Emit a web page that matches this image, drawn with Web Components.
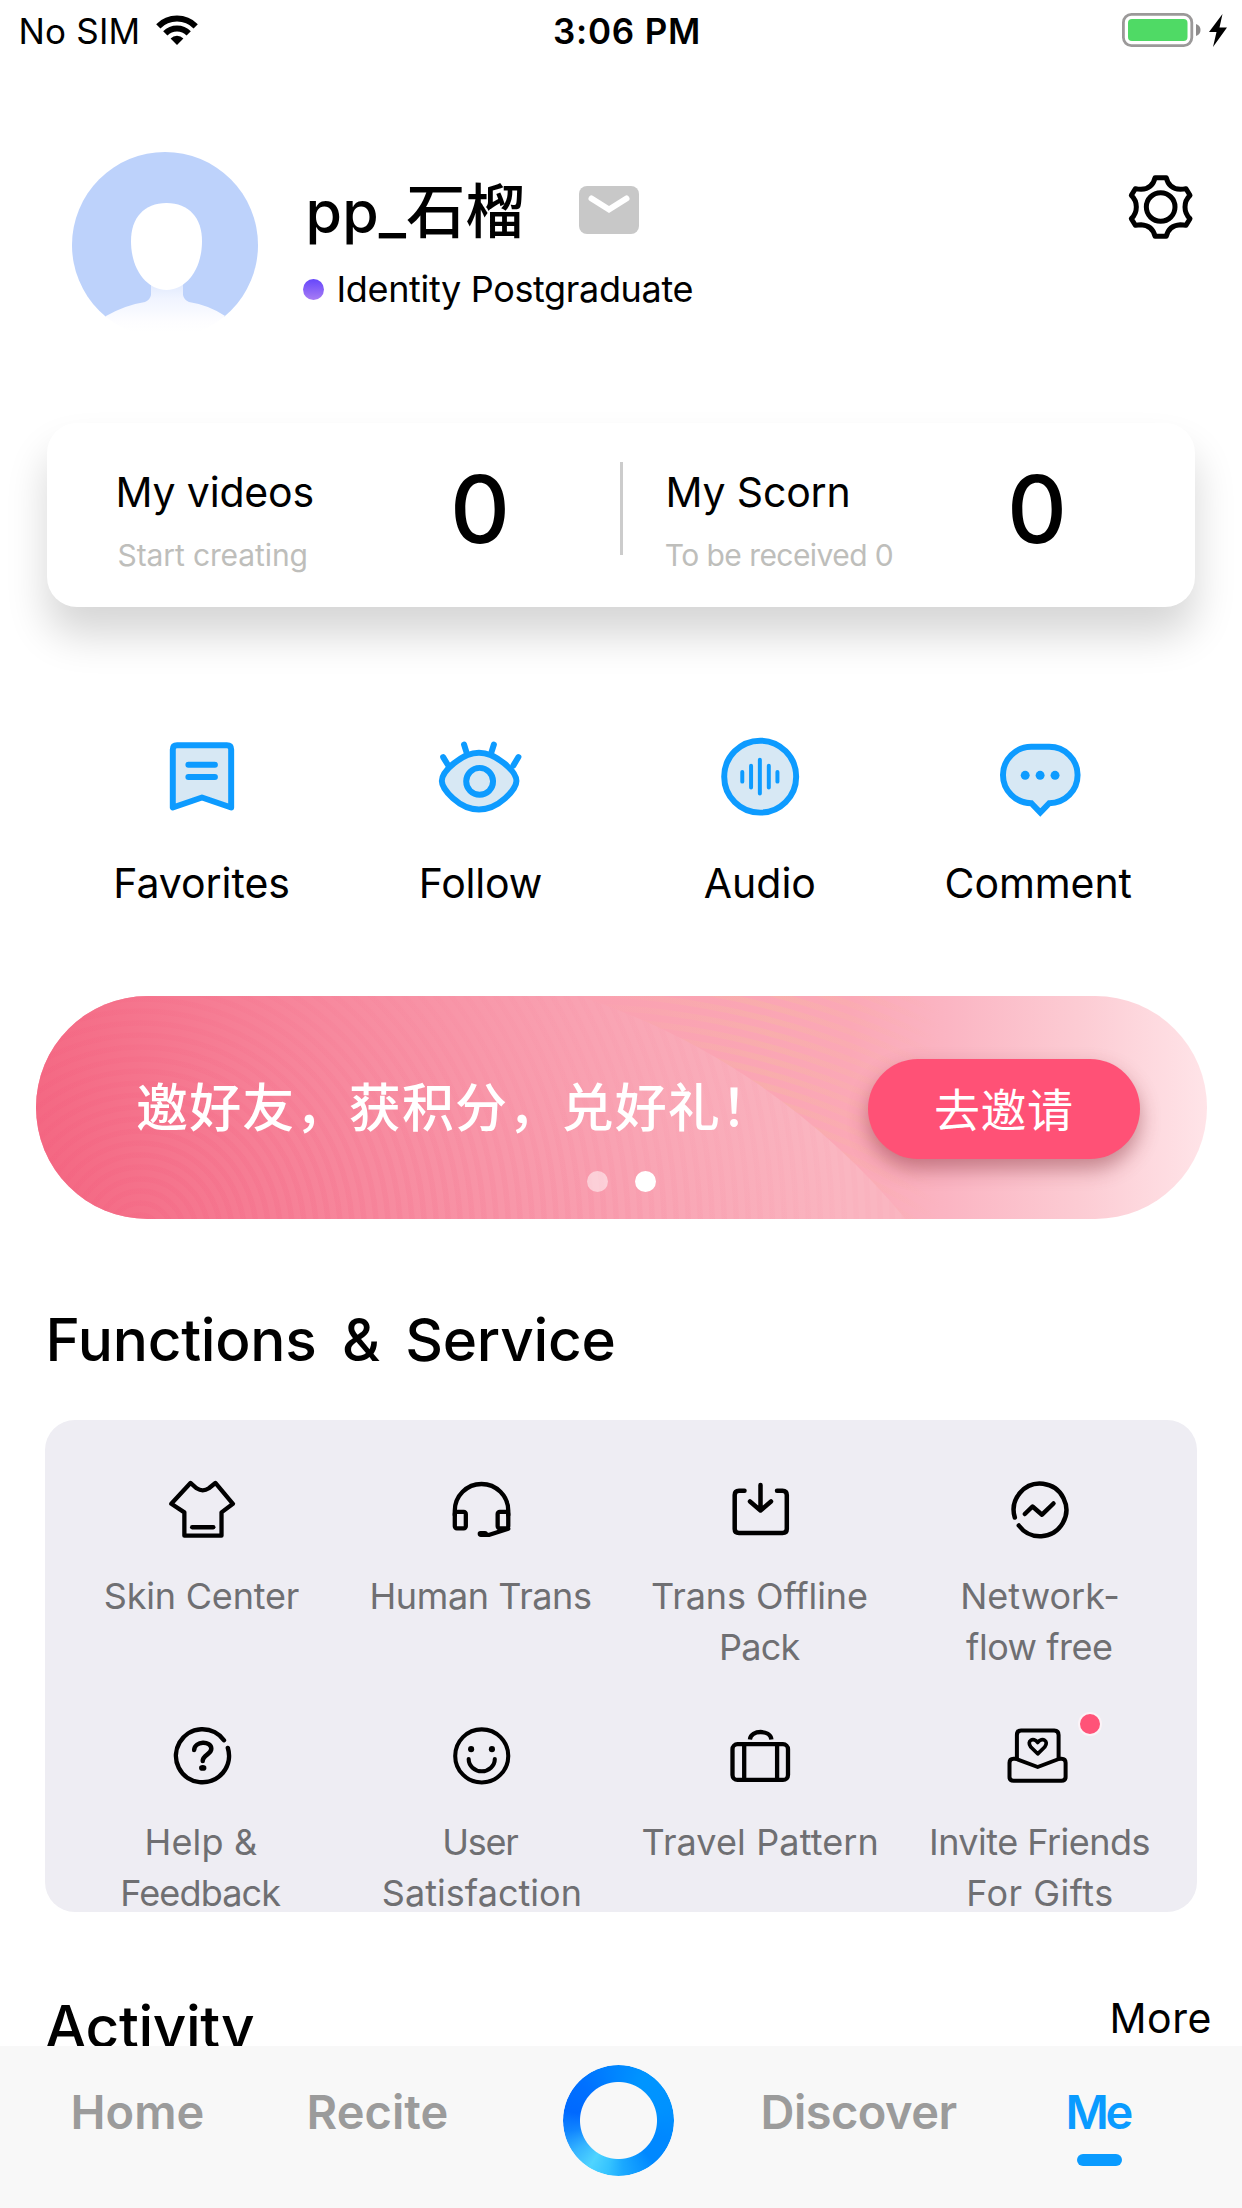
<!DOCTYPE html>
<html lang="en">
<head>
<meta charset="utf-8">
<title>Me</title>
<style>
html,body{margin:0;padding:0}
body{width:1242px;height:2208px;overflow:hidden;background:#fff;color:#000;font-family:Inter,"Noto Sans CJK SC",sans-serif;font-optical-sizing:none}
</style>
</head>
<body>
<profile-app></profile-app>
<script>
const base = '*{box-sizing:border-box}svg{display:block;overflow:visible}';
function define(name, css, html, after) {
  customElements.define(name, class extends HTMLElement {
    connectedCallback() {
      if (this.shadowRoot) return;
      const root = this.attachShadow({ mode: 'open' });
      const body = typeof html === 'function' ? html(this) : html;
      root.innerHTML = '<style>' + base + css + '</style>' + body;
      if (after) after(this, root);
    }
  });
}

/* One line of text whose letters are tracked so that its ink fills the given width. */
const pen = document.createElement('canvas').getContext('2d');
customElements.define('fit-text', class extends HTMLElement {
  connectedCallback() {
    if (this.shadowRoot) return;
    const a = n => this.getAttribute(n);
    const width = +a('w'), size = +a('size'), weight = a('weight') || 400, text = this.textContent;
    const space = +(a('space') || 0);
    const root = this.attachShadow({ mode: 'open' });
    pen.font = `${weight} ${size}px Inter, "Noto Sans CJK SC", sans-serif`;
    const m = pen.measureText(text);
    const ink = m.actualBoundingBoxLeft + m.actualBoundingBoxRight + space * (text.split(' ').length - 1);
    const count = [...text].length;
    /* optical correction for stems and for open or slanted first letters */
    const nudge = /^[BDFHIMNPRSUp]/.test(text) ? 1.5 : /^[ACTf]/.test(text) && size < 50 ? -1.2 : 0;
    const track = count > 1 ? (width - (nudge > 0 ? 2 : 0) - ink) / (count - 1) : 0;
    root.innerHTML = `<style>:host{display:block;flex:none;width:${width}px;height:${a('lh')}px;line-height:${a('lh')}px;font-size:${size}px;font-weight:${weight};white-space:pre}
      span{display:block;width:max-content;margin-left:${m.actualBoundingBoxLeft + nudge}px;letter-spacing:${track}px;word-spacing:${space}px}</style><span><slot></slot></span>`;
  }
});

define('status-bar', `
  :host{display:flex;align-items:center;height:62px;margin-bottom:1px;padding:0 15px 0 20px}
  .wifi{margin:-2px 356px 0 18px}
  .power{display:flex;align-items:center;gap:8px;margin:-2px 0 0 auto}
`, `
  <fit-text w="118" size="35" lh="40">No SIM</fit-text>
  <svg class="wifi" width="42" height="30" viewBox="0 0 42 30">
    <g fill="none" stroke="#000" stroke-width="6"><path d="M2.3 11.3A26.5 26.5 0 0 1 39.7 11.3"/><path d="M9.3 18.3A16.5 16.5 0 0 1 32.7 18.3"/></g>
    <path d="M14.6 23.5A9 9 0 0 1 27.4 23.5L21 30Z"/>
  </svg>
  <fit-text w="144" size="35" lh="40" weight="600">3:06 PM</fit-text>
  <div class="power">
    <svg width="79" height="34" viewBox="0 0 79 34">
      <rect x="1.4" y="1.4" width="68.4" height="31.2" rx="8" fill="none" stroke="#9b9999" stroke-width="2.8"/>
      <rect x="6" y="6" width="59.500" height="22" rx="4" fill="#4fda65"/>
      <path d="M74 11q4.500 1.500 4.500 6t-4.500 6z" fill="#8e8c8c"/>
    </svg>
    <svg width="18" height="33" viewBox="0 0 18 33"><path d="M13.500 0L0 18H7.500L4 33L18 13.500H10.500Z"/></svg>
  </div>
`);

define('profile-header', `
  :host{display:flex;align-items:flex-start;height:360px;padding:89px 49px 0 72px}
  .info{margin:28px auto 0 45px}
  .row{display:flex;align-items:center}
  .name{padding-left:5px;gap:56px}
  .name fit-text{margin:2px 0 -2px}
  .role{gap:14px;margin-top:29px}
  .dot{width:21px;height:21px;border-radius:50%;background:linear-gradient(#6647fb,#a87cf4)}
  .gear{margin-top:23px}
`, `
  <svg width="186" height="186" viewBox="0 0 186 186">
    <defs>
      <clipPath id="disc"><circle cx="93" cy="93" r="93"/></clipPath>
      <linearGradient id="chest" gradientUnits="userSpaceOnUse" x1="0" y1="128" x2="0" y2="180"><stop offset="0" stop-color="#dde7fd"/><stop offset=".35" stop-color="#f0f4ff"/><stop offset=".8" stop-color="#fdfdff"/><stop offset="1" stop-color="#fff"/></linearGradient>
    </defs>
    <g clip-path="url(#disc)">
      <rect width="186" height="165" fill="#bdd2fb"/>
      <path d="M79 128h32v15q1 5 6 7q20 3 37 14.500v2v15H33v-17q20-11.500 40-14.500q5-2 6-7z" fill="url(#chest)"/>
      <path d="M94.500 51C117 51 130 66 130 89C130 119 113 138 94.500 138C76 138 59 119 59 89C59 66 72 51 94.500 51Z" fill="#fff"/>
    </g>
  </svg>
  <div class="info">
    <div class="row name">
      <fit-text w="215" size="59" lh="60" weight="500">pp_石榴</fit-text>
      <svg width="60" height="48" viewBox="0 0 60 48"><rect width="60" height="48" rx="8" fill="#c8c8c8"/><path d="M12.500 12.500L30 23.500L47.500 12.500" fill="none" stroke="#fff" stroke-width="6" stroke-linecap="round"/></svg>
    </div>
    <div class="row role"><span class="dot"></span><fit-text w="355" size="36" lh="40">Identity Postgraduate</fit-text></div>
  </div>
  <svg class="gear" width="64" height="64" viewBox="148 525 192 192" fill="none" stroke="#000" stroke-width="15" stroke-linejoin="round">
    <path d="M226 533H260Q267 566 302 568Q311 568 319 566L331 586Q316 600 316 621Q316 642 331 656L319 676Q311 674 302 674Q267 676 260 709H226Q219 676 184 674Q175 674 167 676L155 656Q170 642 170 621Q170 600 155 586L167 566Q175 568 184 568Q219 566 226 533Z"/>
    <circle cx="243" cy="621" r="43"/>
  </svg>
`);

define('stat-card', `
  :host{display:flex;align-items:flex-start;height:184px;margin:0 47px;border-radius:30px;background:#fff;box-shadow:0 28px 42px rgba(0,0,0,.165)}
  .divider{width:3px;height:93px;margin-top:39px;background:#ccc}
`, `
  <stat-item style="--w:573px;--pad:70px;--num:408px"><fit-text slot="title" w="196" size="41" lh="40">My videos</fit-text><fit-text slot="note" w="190" size="30" lh="30">Start creating</fit-text><fit-text slot="value" w="50" size="93" lh="100" weight="500">0</fit-text></stat-item>
  <span class="divider"></span>
  <stat-item style="--w:572px;--pad:44px;--num:389px"><fit-text slot="title" w="182" size="41" lh="40">My Scorn</fit-text><fit-text slot="note" w="227" size="30" lh="30">To be received 0</fit-text><fit-text slot="value" w="50" size="93" lh="100" weight="500">0</fit-text></stat-item>
`);
define('stat-item', `
  :host{display:grid;grid-template-columns:calc(var(--num) - var(--pad)) 1fr;width:var(--w);padding-left:var(--pad)}
  .words{padding-top:49px}
  .note{margin-top:28px;color:#bebebb}
  .value{padding-top:36px}
`, `<div class="words"><slot name="title"></slot><div class="note"><slot name="note"></slot></div></div><div class="value"><slot name="value"></slot></div>`);

const quick = {
  favorites: ['210.4 75.4 253.3 253.3', '<path d="M249 294V119Q249 106 262 106H412Q425 106 425 119V294L337 264Z" fill="#d7e8f4" stroke-linejoin="round"/><path d="M296 165H376M296 202H376"/>'],
  follow: ['1047.5 75.4 253.3 253.3', '<path d="M1056 214C1056 184 1118 129 1168 129C1218 129 1281 184 1281 214C1281 238 1228 300 1168 300C1108 300 1056 238 1056 214Z" fill="#d7e8f4"/><circle cx="1170" cy="215" r="40.500"/><path d="M1060 142L1074 165M1123 104L1130 126M1213 104L1206 126M1287 142L1272 167"/>'],
  audio: ['205.8 75.4 253.3 253.3', '<circle cx="330" cy="201" r="108.500" fill="#d7e8f4"/><path stroke-width="12" d="M276 187V216M302.500 168V234M329 150V252M356 168V234M382 187V216"/>'],
  comment: ['1044.500 75.4 253.3 253.3', '<path d="M1145 111H1199A85.500 85 0 0 1 1199 281L1172 309L1145 281A85.500 85 0 0 1 1145 111Z" fill="#d7e8f4"/><g fill="#0d9bff" stroke="none"><circle cx="1126.500" cy="197" r="13.500"/><circle cx="1171.500" cy="197" r="13.500"/><circle cx="1216.500" cy="197" r="13.500"/></g>']
};
define('quick-item', `
  :host{display:flex;flex-direction:column;align-items:center;gap:44px}
  svg{fill:none;stroke:#0d9bff;stroke-width:18;stroke-linecap:round}
`, el => `<svg width="84" height="84" viewBox="${quick[el.getAttribute('icon')][0]}">${quick[el.getAttribute('icon')][1]}</svg><slot></slot>`);
define('quick-actions', `:host{display:grid;grid-template-columns:repeat(4,1fr);height:295px;padding:128px 62px 0}`, `
  <quick-item icon="favorites"><fit-text w="174" size="41" lh="40">Favorites</fit-text></quick-item>
  <quick-item icon="follow"><fit-text w="122" size="41" lh="40">Follow</fit-text></quick-item>
  <quick-item icon="audio"><fit-text w="109.500" size="41" lh="40">Audio</fit-text></quick-item>
  <quick-item icon="comment"><fit-text w="185" size="41" lh="40">Comment</fit-text></quick-item>
`);

/* Invitation banner: the artwork lies under the row of copy and button. */
const rings = (cx, cy, from, to, step) => {
  let out = '';
  for (let r = from; r < to; r += step) out += `<circle cx="${cx}" cy="${cy}" r="${r}"/>`;
  return out;
};
define('invite-banner', `
  :host{display:grid;height:223px;margin:94px 35.500px 0;border-radius:112px;overflow:hidden}
  .art,.copy{grid-area:1/1}
  .copy{display:flex;flex-direction:column;z-index:1}
  .line{display:flex;align-items:flex-start;padding:63px 0 0 101.500px}
  .line>fit-text{margin-top:19px;color:#fff}
  .go{margin-left:130px;width:272px;height:100px;border-radius:50px;background:#ff5176;color:#fff;display:grid;place-items:center;box-shadow:0 10px 20px rgba(120,30,40,.42)}
  .go fit-text{margin-top:1px}
  .pages{display:flex;gap:27px;padding:12px 0 0 551.500px}
  .pages i{width:21px;height:21px;border-radius:50%;background:rgba(255,255,255,.5)}
  .pages i:last-child{background:#fff}
`, `
  <svg class="art" width="1171" height="223" viewBox="35.500 996 1171 223">
    <defs>
      <linearGradient id="back" gradientUnits="userSpaceOnUse" x1="560" y1="0" x2="1206" y2="0"><stop offset="0" stop-color="#faa0b0"/><stop offset=".45" stop-color="#fba8b6"/><stop offset=".6" stop-color="#fbb5c3"/><stop offset=".8" stop-color="#fccbd3"/><stop offset="1" stop-color="#ffe4e8"/></linearGradient>
      <linearGradient id="front" gradientUnits="userSpaceOnUse" x1="50" y1="1170" x2="800" y2="1000"><stop offset="0" stop-color="#f46883"/><stop offset=".4" stop-color="#f7899e"/><stop offset=".72" stop-color="#f9a2b2"/><stop offset="1" stop-color="#fab6c1"/></linearGradient>
      <linearGradient id="bands" gradientUnits="userSpaceOnUse" x1="600" y1="0" x2="940" y2="0"><stop offset="0" stop-color="#f6b5a4" stop-opacity=".05"/><stop offset=".5" stop-color="#f6b5a4" stop-opacity=".5"/><stop offset="1" stop-color="#f9b5a4" stop-opacity="0"/></linearGradient>
      <linearGradient id="ripple" gradientUnits="userSpaceOnUse" x1="420" y1="996" x2="300" y2="1219"><stop offset="0" stop-color="#f2577a" stop-opacity=".03"/><stop offset="1" stop-color="#f2577a" stop-opacity=".13"/></linearGradient>
      <clipPath id="hill"><path d="M35 996H579A710 710 0 0 1 905 1219H35Z"/></clipPath>
    </defs>
    <rect x="35" y="996" width="1172" height="223" fill="url(#back)"/>
    <g fill="none" stroke="url(#bands)" stroke-width="6">${rings(560, 1815, 640, 900, 13)}</g>
    <g clip-path="url(#hill)">
      <rect x="35" y="996" width="1172" height="223" fill="url(#front)"/>
      <g fill="none" stroke="url(#ripple)" stroke-width="5.500">${rings(140, 1235, 20, 790, 12)}</g>
    </g>
  </svg>
  <div class="copy">
    <div class="line"><fit-text w="601" size="52" lh="62" weight="500">邀好友，获积分，兑好礼！</fit-text><div class="go"><fit-text w="136" size="46" lh="60">去邀请</fit-text></div></div>
    <div class="pages"><i></i><i></i></div>
  </div>
`);

const services = {
  skin: ['406 451 176.4 176.4', 10.500, '<path d="M466 473L481 486Q496 496 511 486L527 473L570 524L542 545V602H451V545L419 524Z"/><path d="M470 581.500H522"/>'],
  headset: ['1090 451 176.4 176.4', 10.500, '<path d="M1114 552V541A65.500 65.500 0 0 1 1245 541V552"/><rect x="1114" y="544" width="27" height="40" rx="5"/><rect x="1219" y="544" width="26" height="40" rx="5"/><path d="M1245 585L1199 600H1178"/><path d="M1177 597.500H1188" stroke-width="14"/>'],
  offline: ['0.500 0 72 72', 4.500, '<path d="M20 16.700H14.500Q10.200 16.700 10.200 21V55Q10.200 59 14.500 59H58Q62.300 59 62.300 55V21Q62.300 16.700 58 16.700H52.500"/><path d="M36 11V36M25.500 27.500L36 36.500L46.500 27.500"/>'],
  network: ['0 0 72 72', 4.500, '<path d="M10.800 43.500A26.300 26.300 0 1 1 14.800 51.500"/><path d="M20.800 40L28.500 32.500L38 40.700L49.500 29.500"/>'],
  help: ['406 1053.5 176.4 176.4', 11, '<path d="M557.500 1122A65 65 0 1 1 548 1103"/><path d="M475 1127C476 1104 517 1104 517 1124C517 1138 496 1139 496 1154"/><ellipse cx="496" cy="1171" rx="9" ry="7" fill="#000" stroke="none"/>'],
  smile: ['1090 1053.5 176.4 176.4', 10, '<circle cx="1180" cy="1141.500" r="65"/><path d="M1148 1149A32 30 0 0 0 1212 1149"/><g fill="#000" stroke="none"><circle cx="1154" cy="1125" r="7.500"/><circle cx="1205" cy="1125" r="7.500"/></g>'],
  travel: ['0.500 0 72 72', 4.300, '<rect x="8" y="24.200" width="55.500" height="35.700" rx="5"/><path d="M19.700 24.500V59.500M52.600 24.500V59.500" stroke-linecap="butt"/><path d="M25.400 19.500C26.500 9.500 45.800 9.500 46.900 19.500" stroke-linecap="butt"/>'],
  invite: ['0 0 72 72', 4, '<path d="M12.900 38V15Q12.900 10.500 17 10.500H50.300Q54.600 10.500 54.600 15V38"/><path d="M12.700 38.700H9.500Q5.500 38.700 5.500 42.700V57Q5.500 60.800 9.500 60.800H57.500Q61.600 60.800 61.600 57V42.700Q61.600 38.700 57.500 38.700H54.600"/><path d="M12.500 39L33.700 47L54.800 39"/><path d="M33.700 33.800L26.800 27C22 21 29.500 16.500 33.700 22.500C38 16.500 45.500 21 40.700 27Z" stroke-width="3.700"/>']
};
define('service-item', `
  :host{position:relative;display:flex;flex-direction:column;align-items:center;height:246px;color:#6f6f72}
  svg{margin-bottom:25px;fill:none;stroke:#000;stroke-linecap:round;stroke-linejoin:round}
  .badge{position:absolute;left:177px;top:-8px;width:24px;height:24px;border-radius:50%;background:#ff5378;border:2.500px solid #fbf3f7}
`, el => {
  const [box, stroke, shape] = services[el.getAttribute('icon')];
  return `<svg width="72" height="72" viewBox="${box}" stroke-width="${stroke}">${shape}</svg><slot></slot>${el.hasAttribute('badge') ? '<i class="badge"></i>' : ''}`;
});
const label = (t, w) => `<fit-text w="${w}" size="36" lh="51">${t}</fit-text>`;
define('service-grid', `
  :host{display:grid;grid-template-columns:repeat(4,279.500px);height:492px;margin:50px 45px 0;padding:54px 17px 0;border-radius:30px;background:#eeedf3}
`, `
  <service-item icon="skin">${label('Skin Center', 195)}</service-item>
  <service-item icon="headset">${label('Human Trans', 220.500)}</service-item>
  <service-item icon="offline">${label('Trans Offline', 215)}${label('Pack', 80.500)}</service-item>
  <service-item icon="network">${label('Network-', 157)}${label('flow free', 146)}</service-item>
  <service-item icon="help">${label('Help &amp;', 111.500)}${label('Feedback', 160)}</service-item>
  <service-item icon="smile">${label('User', 75)}${label('Satisfaction', 198)}</service-item>
  <service-item icon="travel">${label('Travel Pattern', 234)}</service-item>
  <service-item icon="invite" badge>${label('Invite Friends', 219.500)}${label('For Gifts', 145)}</service-item>
`);

define('section-title', `:host{display:flex;justify-content:space-between;align-items:flex-start}`, `<slot></slot>`);

define('tab-bar', `
  :host{display:flex;align-items:flex-start;height:162px;padding-left:72px;background:#f8f8f8;color:#9b9b9b}
  .tab{margin-top:41px}
  .me{display:flex;flex-direction:column;align-items:center;gap:17px;color:#0a9bff}
  .me i{width:45px;height:12px;border-radius:6px;background:currentColor}
  .ring{width:111px;height:111px;margin:19px 88px 0 116px;border-radius:50%;
    background:conic-gradient(#0087ff 0deg,#0095ff 30deg,#0092ff 75deg,#0088ff 110deg,#0088ff 140deg,#1ba9ff 175deg,#35c3ff 192deg,#4fd4ff 212deg,#35b4ff 235deg,#1085ff 258deg,#0069ff 280deg,#0070ff 315deg,#0087ff 360deg);
    -webkit-mask:radial-gradient(circle,transparent 38px,#000 39px);mask:radial-gradient(circle,transparent 38px,#000 39px)}
`, `
  <fit-text class="tab" w="131" size="47" lh="50" weight="600">Home</fit-text>
  <fit-text class="tab" style="margin-left:105px" w="139" size="47" lh="50" weight="600">Recite</fit-text>
  <div class="ring"></div>
  <fit-text class="tab" w="195" size="47" lh="50" weight="600">Discover</fit-text>
  <div class="tab me" style="margin-left:110px"><fit-text w="65" size="47" lh="50" weight="600">Me</fit-text><i></i></div>
`);

define('profile-app', `
  :host{display:flex;flex-direction:column;width:1242px;height:2208px;overflow:hidden}
  main{height:2046px;flex:none;overflow:hidden}
  .fn{padding:91px 0 0 48px}
  .act{padding:85px 32px 0 46px}
`, `
  <main>
    <status-bar></status-bar>
    <profile-header></profile-header>
    <stat-card></stat-card>
    <quick-actions></quick-actions>
    <invite-banner></invite-banner>
    <section-title class="fn"><fit-text w="566" size="58.500" lh="60" weight="500" space="10">Functions &amp; Service</fit-text></section-title>
    <service-grid></service-grid>
    <section-title class="act"><fit-text w="208" size="58.500" lh="60" weight="500">Activity</fit-text><fit-text w="99" size="41" lh="43">More</fit-text></section-title>
  </main>
  <tab-bar></tab-bar>
`);
</script>
</body>
</html>
